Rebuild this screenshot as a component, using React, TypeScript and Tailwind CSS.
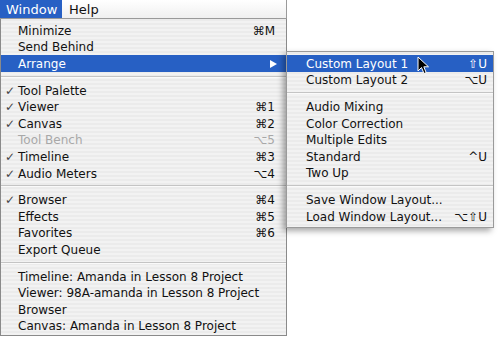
import React from "react";

type Item =
  | { sep: true }
  | { label: string; key?: string; check?: boolean; disabled?: boolean; hi?: boolean; arrow?: boolean };

const mainItems: Item[] = [
  { label: "Minimize", key: "⌘M" },
  { label: "Send Behind" },
  { label: "Arrange", hi: true, arrow: true },
  { sep: true },
  { label: "Tool Palette", check: true },
  { label: "Viewer", check: true, key: "⌘1" },
  { label: "Canvas", check: true, key: "⌘2" },
  { label: "Tool Bench", disabled: true, key: "⌥5" },
  { label: "Timeline", check: true, key: "⌘3" },
  { label: "Audio Meters", check: true, key: "⌥4" },
  { sep: true },
  { label: "Browser", check: true, key: "⌘4" },
  { label: "Effects", key: "⌘5" },
  { label: "Favorites", key: "⌘6" },
  { label: "Export Queue" },
  { sep: true },
  { label: "Timeline: Amanda in Lesson 8 Project" },
  { label: "Viewer: 98A-amanda in Lesson 8 Project" },
  { label: "Browser" },
  { label: "Canvas: Amanda in Lesson 8 Project" },
];

const subItems: Item[] = [
  { label: "Custom Layout 1", key: "⇧U", hi: true },
  { label: "Custom Layout 2", key: "⌥U" },
  { sep: true },
  { label: "Audio Mixing" },
  { label: "Color Correction" },
  { label: "Multiple Edits" },
  { label: "Standard", key: "^U" },
  { label: "Two Up" },
  { sep: true },
  { label: "Save Window Layout..." },
  { label: "Load Window Layout...", key: "⌥⇧U" },
];

function Row({ item, padLeft, padRight }: { item: Item; padLeft: string; padRight: string }) {
  if ("sep" in item) {
    return (
      <div className="h-[10px] flex flex-col justify-center">
        <div className="h-px bg-[#c4c4c4]" />
        <div className="h-px bg-[#fafafa]" />
      </div>
    );
  }
  const color = item.hi ? "text-white" : item.disabled ? "text-[#a8a8a8]" : "text-[#111]";
  return (
    <div
      className={`relative h-[16.6px] pt-[1px] flex items-center ${padLeft} ${padRight} ${color} ${
        item.hi ? "bg-[#2760c4]" : ""
      }`}
    >
      {item.check && (
        <span className="absolute left-[4px] top-0 pt-[1px] h-full flex items-center text-[12px] text-[#444]">✓</span>
      )}
      <span className="flex-1 whitespace-nowrap">{item.label}</span>
      {item.key && <span className="whitespace-nowrap">{item.key}</span>}
      {item.arrow && (
        <svg width="9" height="10" viewBox="0 0 9 10" className="mr-[-3px]">
          <polygon points="1,1 8,5 1,9" fill="#fff" />
        </svg>
      )}
    </div>
  );
}

export default function App() {
  const stripes =
    "bg-[repeating-linear-gradient(to_bottom,#ebebeb_0px,#ebebeb_2px,#f2f2f2_2px,#f2f2f2_4px)]";
  return (
    <div
      className="relative w-[500px] h-[338px] bg-white overflow-hidden text-[12px] leading-none"
      style={{ fontFamily: '"DejaVu Sans", "Noto Sans", sans-serif' }}
    >
      {/* menu bar */}
      <div className="w-[287px] h-[19px] flex items-stretch text-[13px] bg-[linear-gradient(to_bottom,#ffffff,#f0f0f0)] border-b border-r border-[#9a9a9a]">
        <div className="w-[62px] bg-[#2760c4] text-white flex items-center pl-[6px]">Window</div>
        <div className="flex items-center pl-[7px] text-[#111]">Help</div>
      </div>
      {/* main menu */}
      <div className={`w-[287px] h-[317px] ${stripes} border-l border-r border-b border-[#8a8a8a] pt-[3px]`}>
        {mainItems.map((it, i) => (
          <Row key={i} item={it} padLeft="pl-[17px]" padRight="pr-[11px]" />
        ))}
      </div>
      {/* submenu */}
      <div
        className={`absolute left-[286px] top-[51px] w-[208px] ${stripes} border border-[#9a9a9a] pt-[3px] pb-[3px] shadow-[-3px_3px_6px_rgba(0,0,0,0.35)]`}
      >
        {subItems.map((it, i) => (
          <Row key={i} item={it} padLeft="pl-[19px]" padRight="pr-[6px]" />
        ))}
      </div>
      {/* cursor */}
      <svg className="absolute left-[417px] top-[56px]" width="14" height="20" viewBox="0 0 14 20">
        <path d="M1,1 L1,15 L4.5,11.5 L7,17.5 L9.2,16.6 L6.8,10.8 L11.5,10.8 Z" fill="#000" stroke="#fff" strokeWidth="1" />
      </svg>
    </div>
  );
}
